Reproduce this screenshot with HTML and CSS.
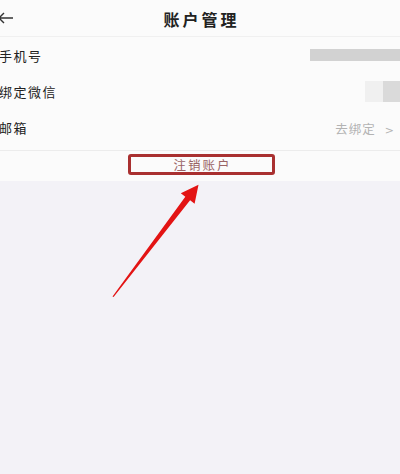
FILE: index.html
```html
<!DOCTYPE html>
<html lang="zh">
<head>
<meta charset="utf-8">
<link rel="stylesheet" href="styles.css">
<title>账户管理</title>
</head>
<body>
<div class="page">
  <header class="topbar">
    <svg class="back" width="16" height="12" viewBox="0 0 16 12"><path d="M15 6H1M6 1L1 6l5 5" fill="none" stroke="#333" stroke-width="1.4"/></svg>
    <h1 class="title">账户管理</h1>
  </header>
  <section class="list">
    <div class="row">
      <span class="label">手机号</span>
      <span class="blur-bar"></span>
    </div>
    <div class="row">
      <span class="label">绑定微信</span>
      <span class="blur-block"><span class="blur-fade"></span><span class="blur-solid"></span></span>
    </div>
    <div class="row">
      <span class="label">邮箱</span>
      <span class="action">去绑定<span class="chev">&gt;</span></span>
    </div>
  </section>
  <div class="cancel-band">
    <div class="cancel-box">注销账户</div>
  </div>
  <svg class="arrow" width="400" height="474" viewBox="0 0 400 474">
    <polygon points="112.5,296.5 185.3,196.7 180.8,193.2 198.5,184.8 194.6,203.8 190.1,200.3 113.6,297" fill="#e31414"/>
  </svg>
</div>
</body>
</html>
```
FILE: styles.css
```css
html, body {
  margin: 0;
  padding: 0;
  background: #f3f2f7;
  font-family: "Noto Sans CJK SC", "Noto Sans", sans-serif;
  color: #222;
}
.page {
  position: relative;
  width: 400px;
  height: 474px;
  overflow: hidden;
}
.topbar {
  height: 36px;
  background: #fbfbfb;
  border-bottom: 1px solid #f0f0f0;
  display: flex;
  align-items: center;
  justify-content: center;
  position: relative;
}
.back {
  position: absolute;
  left: -2px;
  top: 12px;
}
.title {
  margin: 0;
  font-size: 16px;
  font-weight: 600;
  letter-spacing: 3px;
  padding-left: 3px;
  color: #222;
  line-height: 1;
  padding-top: 1px;
}
.list {
  background: #fbfbfb;
  padding-bottom: 5px;
  border-bottom: 1px solid #ececec;
}
.row {
  height: 36px;
  display: flex;
  align-items: center;
  justify-content: space-between;
}
.label {
  font-size: 13px;
  letter-spacing: 1.5px;
  margin-left: -1px;
  color: #222;
}
.blur-bar {
  width: 90px;
  height: 12px;
  background: #d2d2d2;
  margin-top: -1px;
}
.blur-block {
  display: flex;
  height: 21px;
}
.blur-fade {
  width: 18px;
  background: #f0f0f0;
}
.blur-solid {
  width: 17px;
  background: #dadada;
}
.action {
  font-size: 12.5px;
  color: #b3b3b3;
  letter-spacing: 1px;
  margin-right: 5px;
  padding-top: 2px;
}
.chev {
  margin-left: 9px;
  font-family: "DejaVu Sans", sans-serif;
  font-size: 11px;
}
.cancel-band {
  height: 30px;
  background: #fbfbfb;
  display: flex;
  justify-content: center;
  align-items: flex-start;
  padding-top: 3px;
  box-sizing: border-box;
}
.cancel-box {
  width: 147px;
  height: 21px;
  box-sizing: border-box;
  border: 3px solid #a93030;
  border-radius: 3px;
  display: flex;
  align-items: center;
  justify-content: center;
  font-size: 12.5px;
  letter-spacing: 2px;
  padding-left: 2px;
  color: #9a6466;
  margin-left: 3px;
}
.arrow {
  position: absolute;
  left: 0;
  top: 0;
  pointer-events: none;
}
```
